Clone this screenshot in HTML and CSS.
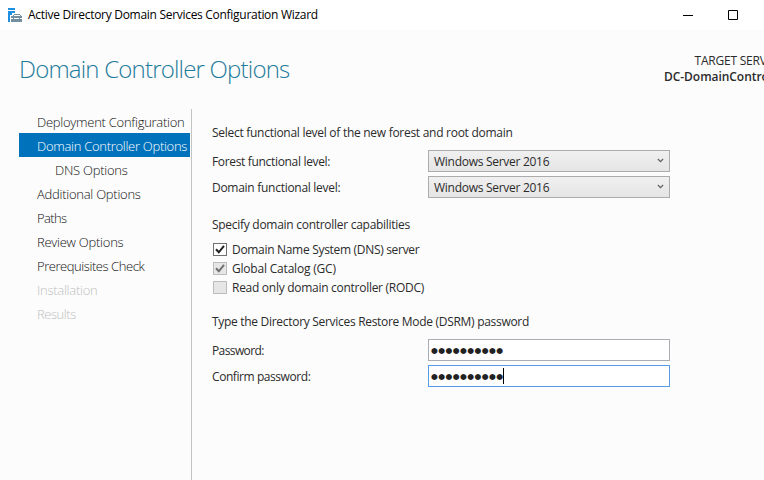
FILE: index.html
```html
<!DOCTYPE html>
<html lang="en">
<head>
<meta charset="utf-8">
<title>Active Directory Domain Services Configuration Wizard</title>
<link rel="stylesheet" href="styles.css">
</head>
<body>
<header class="titlebar">
  <svg class="app-icon" width="15" height="15" viewBox="0 0 15 15" shape-rendering="crispEdges">
    <path fill="#1e8fe0" d="M0 0h7v2H0zM0 3h7v2H4v2H2v7H0z"/>
    <path fill="#7390a0" d="M6 6h6v1H6zM5 7h1v1H5zM12 7h1v1h-1zM3 8h11v2H3zM3 11h11v3H3zM5 10h1v1H5zM11 10h1v1h-1z"/>
  </svg>
  <span class="window-title">Active Directory Domain Services Configuration Wizard</span>
  <svg class="window-controls" width="56" height="12" viewBox="0 0 56 12" fill="none" stroke="#000">
    <path d="M0 6.5h10M45.5 1.5h9v9h-9z"/>
  </svg>
</header>
<div class="banner">
  <h1>Domain Controller Options</h1>
  <div class="target"><div class="target-label">TARGET SERVER</div><div class="target-name">DC-DomainController</div></div>
</div>
<div class="content">
  <nav class="steps">
    <div class="step s1">Deployment Configuration</div>
    <div class="step s2 active">Domain Controller Options</div>
    <div class="step s3 child">DNS Options</div>
    <div class="step s4">Additional Options</div>
    <div class="step s5">Paths</div>
    <div class="step s6">Review Options</div>
    <div class="step s7">Prerequisites Check</div>
    <div class="step s8 disabled">Installation</div>
    <div class="step s9 disabled">Results</div>
  </nav>
  <main>
    <p class="legend l1">Select functional level of the new forest and root domain</p>
    <section class="fields">
      <div class="row"><label class="f1">Forest functional level:</label><div class="select"><span>Windows Server 2016</span><svg width="7" height="5" viewBox="0 0 7 5"><path d="M.9 1 3.5 3.6 6.1 1" fill="none" stroke="#606060" stroke-width="1.2"/></svg></div></div>
      <div class="row"><label class="f2">Domain functional level:</label><div class="select"><span>Windows Server 2016</span><svg width="7" height="5" viewBox="0 0 7 5"><path d="M.9 1 3.5 3.6 6.1 1" fill="none" stroke="#606060" stroke-width="1.2"/></svg></div></div>
    </section>
    <p class="legend l2">Specify domain controller capabilities</p>
    <section class="checks">
      <div class="check"><i class="box"><svg width="12" height="11" viewBox="0 0 12 11"><path d="M2 5.3 4.8 8.3 10 1.8" fill="none" stroke="#212121" stroke-width="2"/></svg></i><span class="c1">Domain Name System (DNS) server</span></div>
      <div class="check"><i class="box off"><svg width="12" height="11" viewBox="0 0 12 11"><path d="M2 5.3 4.8 8.3 10 1.8" fill="none" stroke="#707070" stroke-width="2"/></svg></i><span class="c2">Global Catalog (GC)</span></div>
      <div class="check"><i class="box off"></i><span class="c3">Read only domain controller (RODC)</span></div>
    </section>
    <p class="legend l3">Type the Directory Services Restore Mode (DSRM) password</p>
    <section class="fields">
      <div class="row"><label class="f3">Password:</label><div class="input"><span>●●●●●●●●●●</span></div></div>
      <div class="row"><label class="f4">Confirm password:</label><div class="input focus"><span>●●●●●●●●●●</span><i class="caret"></i></div></div>
    </section>
  </main>
</div>
</body>
</html>
```
FILE: styles.css
```css
* { box-sizing: border-box; }
body {
  margin: 0;
  width: 764px;
  height: 480px;
  overflow: hidden;
  background: #fcfcfc;
  color: #2b2b2b;
  font: 12px/16px "Open Sans", "Noto Sans", sans-serif;
  letter-spacing: -.28px;
  white-space: nowrap;
}
h1, p { margin: 0; font-weight: 400; }
.titlebar { display: flex; align-items: center; height: 30px; padding-left: 8px; background: #fff; color: #000; }
.app-icon { margin-right: 5px; }
.window-title { width: 655px; letter-spacing: -.29px; }
.window-controls { flex: none; }
.banner { display: flex; justify-content: space-between; height: 79px; padding: 22px 0 0 19px; }
h1 { color: #1f7b9b; font-size: 24px; line-height: 34px; font-weight: 300; letter-spacing: -.8px; }
.target { flex: none; width: 100px; padding-top: 1px; line-height: 16px; }
.target-label { padding-left: 30.5px; letter-spacing: -.22px; font-weight: 500; }
.target-name { font-weight: 600; letter-spacing: -.05px; }
.content { display: flex; height: 371px; padding-left: 19px; }
.steps { flex: none; width: 173px; border-right: 1px solid #c3c3c3; }
.step { width: 171px; height: 24px; padding-left: 18px; color: #111; font-size: 13px; line-height: 26px; font-weight: 300; letter-spacing: -.26px; }
.step.child { padding-left: 36px; }
.step.active { color: #fff; background: #0072bc; letter-spacing: -.29px; }
.step.disabled { color: #c0c0c0; }
.step.s5 { letter-spacing: -.6px; }
.step.s7 { letter-spacing: -.44px; }
.step.s9 { letter-spacing: -.45px; }
main { padding: 16px 0 0 20px; }
.legend { height: 16px; }
.fields { display: flex; flex-direction: column; gap: 4px; padding: 9px 0; }
.row { display: flex; align-items: center; height: 22px; }
.row label { width: 216px; padding-top: 2px; }
.f1 { letter-spacing: -.33px; }
.f3 { letter-spacing: -.6px; }
.f4 { letter-spacing: -.43px; }
.select, .input { display: flex; align-items: center; width: 242px; height: 22px; border: 1px solid #acacac; }
.select { justify-content: space-between; padding: 0 5px; background: linear-gradient(#f0f0f0, #e5e5e5); }
.select span { padding-top: 2px; }
.select svg { margin-bottom: 2px; }
.input { padding-left: 2px; background: #fff; border-color: #abadb3; }
.input span { padding-top: 2px; font: 7.8px/14px "DejaVu Sans", sans-serif; letter-spacing: .45px; color: #222; }
.focus { border-color: #569de5; }
.caret { width: 1px; height: 16px; margin-left: -1px; background: #000; }
.l2 { margin-top: 10px; }
.checks { padding: 7px 0 17px 1px; }
.check { display: flex; align-items: center; height: 19px; gap: 5px; }
.c1 { letter-spacing: -.31px; }
.c2 { letter-spacing: -.2px; }
.box { display: flex; width: 14px; height: 13px; border: 1px solid #707070; background: #fff; }
.box svg { flex: none; }
.box.off { border-color: #bcbcbc; background: #e6e6e6; }
.l3 { letter-spacing: -.3px; }
```
